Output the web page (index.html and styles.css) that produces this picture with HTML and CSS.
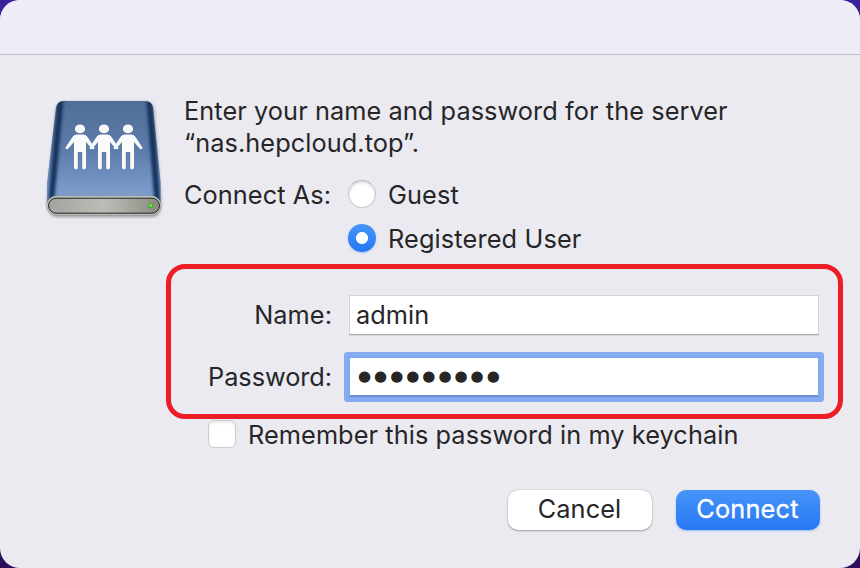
FILE: index.html
```
<!DOCTYPE html>
<html lang="en">
  <head>
    <meta charset="utf-8" />
    <title>Connect to Server</title>
    <link rel="stylesheet" href="styles.css">
  </head>
  <body>
    <div class="dialog">
      <header class="titlebar"></header>

      <form class="content">
        <div class="intro">
          <svg class="drive-icon" width="120" height="124" viewBox="0 0 120 124">
            <defs>
              <linearGradient id="lid" x1="0" y1="0" x2="0" y2="1">
                <stop offset="0" stop-color="#4e6c95" />
                <stop offset="0.5" stop-color="#5c7dab" />
                <stop offset="1" stop-color="#84a5d4" />
              </linearGradient>
              <linearGradient id="front" x1="0" y1="0" x2="1" y2="0">
                <stop offset="0" stop-color="#a3a49f" />
                <stop offset="0.5" stop-color="#bdbcb7" />
                <stop offset="1" stop-color="#8b8a82" />
              </linearGradient>
              <filter id="shadow" x="-10%" y="-10%" width="120%" height="125%">
                <feGaussianBlur stdDeviation="1.5" />
              </filter>
              <clipPath id="lidShape">
                <path d="M12 13Q13 6 20.500 6H100.500Q108 6 109 13L116.700 88V108H3V88Z" />
              </clipPath>
              <g id="person">
                <ellipse cx="0" cy="0" rx="5.1" ry="4.3" />
                <path d="M-3.500 5.500H3.500Q6 5.500 7.500 8L14.300 18.300Q14.800 20.200 13 20.300Q12 20.300 11.200 19.200L6 13V38.500A1.900 1.900 0 0 1 2.200 38.500V23H-2.200V38.500A1.900 1.900 0 0 1 -6 38.500V13L-11.200 19.200Q-12 20.300 -13 20.300Q-14.800 20.200 -14.300 18.300L-7.500 8Q-6 5.500 -3.500 5.500Z" />
              </g>
            </defs>
            <path d="M12 13Q14 7 20 7H102Q108 7 110 13L117 104Q119 122 107 122H14Q2 122 3 104Z" fill="#555" opacity="0.55" filter="url(#shadow)" />
            <g clip-path="url(#lidShape)">
              <rect x="0" y="0" width="120" height="110" fill="url(#lid)" />
              <!-- dark rounded sides of the case -->
              <g fill="none" stroke="#14325c" stroke-width="6" filter="url(#shadow)">
                <path d="M17 0L7 108" />
                <path d="M105 0L113.500 108" />
              </g>
            </g>
            <rect x="2.700" y="100.900" width="114.400" height="19.200" rx="9.600" fill="#c9c9c7" stroke="#8c8e8e" stroke-width="0.500" />
            <rect x="4.500" y="103.200" width="111" height="15" rx="7.500" fill="url(#front)" stroke="#19241f" stroke-width="1" />
            <circle cx="107" cy="110.700" r="2.600" fill="#49a82f" />
            <circle cx="106.800" cy="110.500" r="1.500" fill="#65ef3d" />
            <g fill="#fafafa">
              <use href="#person" x="36" y="33.900" />
              <use href="#person" x="60" y="33.900" />
              <use href="#person" x="84" y="33.900" />
            </g>
          </svg>

          <div class="intro-text">
            <p class="message">Enter your name and password for the server<br>“nas.hepcloud.top”.</p>
            <div class="connect-as">
              <span class="label connect-label">Connect As:</span>
              <div class="choices">
                <label class="choice"><span class="radio"></span>Guest</label>
                <label class="choice"><span class="radio checked"></span>Registered User</label>
              </div>
            </div>
          </div>
        </div>

        <div class="credentials">
          <span class="label">Name:</span>
          <div class="field">admin</div>
          <span class="label password-label">Password:</span>
          <div class="field focused"><span class="dots">●●●●●●●●●</span></div>
        </div>

        <label class="remember">
          <span class="checkbox"></span>
          Remember this password in my keychain
        </label>

        <div class="buttons">
          <button type="button" class="button cancel">Cancel</button>
          <button type="button" class="button connect">Connect</button>
        </div>
      </form>
    </div>
  </body>
</html>
```
FILE: styles.css
```
* {
  box-sizing: border-box;
}
body {
  margin: 0;
  background: linear-gradient(#3b209b, #2b0f5c);
  font-family: Inter, sans-serif;
  font-size: 25.3px;
  line-height: 32px;
  letter-spacing: 0.08px;
  color: #262628;
}
.dialog {
  height: 568px;
  border-radius: 20px;
  background: #ebeaf0;
  overflow: hidden;
}
.titlebar {
  height: 55px;
  background: #eeecf6;
  border-bottom: 1px solid #c0bec6;
}
.content {
  padding-top: 40px;
}
/* Icon and message */
.intro {
  display: flex;
  gap: 20px;
  padding-left: 44px;
}
.drive-icon {
  display: block;
}
.message {
  margin: 0 0 20px;
  white-space: nowrap;
}
.connect-as {
  display: flex;
  gap: 17px;
}
.connect-label {
  width: 147px;
}
.choices {
  display: flex;
  flex-direction: column;
  gap: 12px;
}
.choice {
  display: flex;
  gap: 12px;
  letter-spacing: 0.14px;
}
.radio {
  width: 28px;
  height: 28px;
  margin-top: 1px;
  border-radius: 50%;
  background: #fff;
  border: 1px solid #c8c7cc;
  border-top-color: #b4b3b8;
  box-shadow: inset 0 2px 3px rgba(0, 0, 0, 0.12);
}
.radio.checked {
  border: 0;
  background: radial-gradient(circle, #fff 5.6px, transparent 6.4px), linear-gradient(#4794f8, #2678f5);
  box-shadow: 0 1px 2px rgba(38, 120, 245, 0.35);
}
.label {
  white-space: nowrap;
}
/* Name and password */
.credentials {
  display: grid;
  grid-template-columns: 161px 470px;
  column-gap: 17px;
  row-gap: 22px;
  align-items: center;
  width: 677px;
  height: 155px;
  margin: 9px 0 0 166px;
  padding: 26px 0 0;
  border: 5px solid #ee1c25;
  border-radius: 19px;
  align-content: start;
}
.credentials .label {
  text-align: right;
}
.credentials .password-label {
  letter-spacing: -0.05px;
}
.field {
  height: 40px;
  padding: 3px 6px;
  background: #fff;
  border: 1px solid #d5d4d9;
  border-bottom-color: #aaa9ad;
  box-shadow: 0 1px 0 #d6d5da;
}
.field.focused {
  border-color: #79a3ec;
  border-bottom: 2px solid #6990d3;
  box-shadow: 0 0 0 5px #86abf0;
  border-radius: 1px;
}
.dots {
  display: block;
  padding-left: 2px;
  font-family: "DejaVu Sans", sans-serif;
  font-size: 15px;
  line-height: 31px;
  letter-spacing: 3px;
}
.remember {
  display: flex;
  gap: 12px;
  padding-left: 208px;
  white-space: nowrap;
}
.checkbox {
  width: 28px;
  height: 28px;
  margin-top: 1px;
  border: 1px solid #cccbd0;
  border-radius: 6px;
  background: #fff;
  box-shadow: inset 0 2px 3px rgba(0, 0, 0, 0.08);
}
/* Buttons */
.buttons {
  display: flex;
  justify-content: flex-end;
  gap: 24px;
  margin-top: 39px;
  padding-right: 40px;
}
.button {
  width: 144px;
  height: 40px;
  padding: 0 1px 2px 0;
  border: 0;
  border-radius: 10px;
  font: inherit;
  letter-spacing: inherit;
  color: inherit;
}
.cancel {
  background: #fff;
  box-shadow: 0 0 1px rgba(0, 0, 0, 0.35), 0 1px 2px rgba(0, 0, 0, 0.3);
}
.connect {
  background: linear-gradient(#4794f8, #2678f5);
  box-shadow: 0 1px 2px rgba(38, 120, 245, 0.4);
  color: #fff;
  letter-spacing: 0.2px;
  -webkit-text-stroke: 0.3px #fff;
}
```
